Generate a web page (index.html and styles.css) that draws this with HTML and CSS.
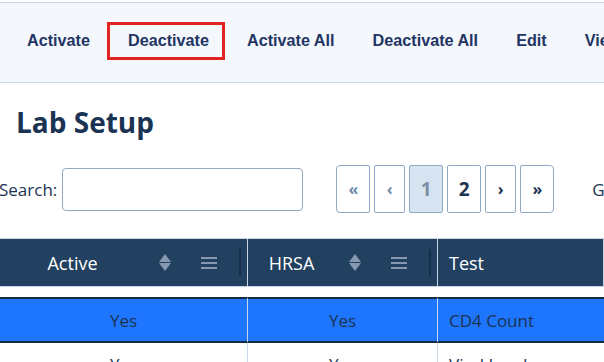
FILE: index.html
```html
<!DOCTYPE html>
<html lang="en">
<head>
    <meta charset="UTF-8">
    <meta name="viewport" content="width=device-width, initial-scale=1.0">
    <title>Lab Setup</title>
    <link rel="stylesheet" href="styles.css">
</head>
<body>
    <div class="barra">
        <button class="acao">Activate</button>
        <button class="acao marcado">Deactivate</button>
        <button class="acao">Activate All</button>
        <button class="acao">Deactivate All</button>
        <button class="acao">Edit</button>
        <button class="acao">View</button>
    </div>

    <h1 class="titulo">Lab Setup</h1>

    <div class="filtros">
        <label class="rotulo" for="busca">Search:</label>
        <input type="text" id="busca" class="busca">
        <div class="paginas">
            <button class="pagina apagada">&laquo;</button>
            <button class="pagina apagada">&lsaquo;</button>
            <button class="pagina atual">1</button>
            <button class="pagina numero">2</button>
            <button class="pagina">&rsaquo;</button>
            <button class="pagina">&raquo;</button>
        </div>
        <span class="ir">Go to page</span>
    </div>

    <div class="tabela">
        <div class="cab centro">
            <span class="nome">Active</span>
            <span class="ordem"><i class="cima"></i><i class="baixo"></i></span>
            <span class="menu"><i></i><i></i><i></i></span>
            <span class="alca"></span>
        </div>
        <div class="cab centro">
            <span class="nome">HRSA</span>
            <span class="ordem"><i class="cima"></i><i class="baixo"></i></span>
            <span class="menu"><i></i><i></i><i></i></span>
            <span class="alca"></span>
        </div>
        <div class="cab esquerda">
            <span class="nome">Test</span>
        </div>

        <div class="espaco"></div>

        <div class="cel centro sel">Yes</div>
        <div class="cel centro sel">Yes</div>
        <div class="cel sel">CD4 Count</div>

        <div class="cel centro">Yes</div>
        <div class="cel centro">Yes</div>
        <div class="cel">Viral Load</div>
    </div>
</body>
</html>
```

FILE: styles.css
```css
body {
    margin: 0;
    font-family: "Open Sans", "Noto Sans", sans-serif;
    color: #1b3352;
    background-color: #ffffff;
    overflow: hidden;
}

.barra {
    margin-top: 2px;
    padding: 0 0 4px 8px;
    box-sizing: border-box;
    height: 81px;
    display: flex;
    align-items: center;
    background-color: #f4f7fc;
    border-top: 1px solid #c8d8e8;
    border-bottom: 1px solid #c8d8e8;
    overflow: hidden;
    white-space: nowrap;
}

.acao {
    position: relative;
    flex: none;
    height: 38px;
    padding: 0 19px;
    font-family: "Liberation Sans", Arial, sans-serif;
    font-weight: bold;
    font-size: 16.2px;
    color: #1f3564;
    background: none;
    border: none;
    cursor: pointer;
}

.marcado::after {
    content: "";
    position: absolute;
    top: 0;
    bottom: 0;
    left: -2px;
    right: 3px;
    border: 3px solid #e02424;
}

.titulo {
    margin: 20px 0 0 16px;
    font-size: 28px;
    font-weight: bold;
    line-height: 38px;
    color: #1b3352;
}

.filtros {
    display: flex;
    align-items: center;
    margin-top: 24px;
    padding-bottom: 25px;
    border-bottom: 1px solid #ccd6e0;
    white-space: nowrap;
    overflow: hidden;
}

.filtros > * {
    flex: none;
}

.rotulo {
    margin-left: -1px;
    font-size: 17px;
    color: #1b3352;
}

.busca {
    margin-left: 5px;
    width: 241px;
    height: 43px;
    box-sizing: border-box;
    border: 1px solid #93a8bf;
    border-radius: 4px;
    font-size: 16px;
}

.paginas {
    display: flex;
    gap: 4px;
    margin-left: 33px;
}

.pagina {
    width: 34px;
    height: 48px;
    padding: 0;
    font-family: "Open Sans", sans-serif;
    font-weight: bold;
    font-size: 16px;
    color: #1b3352;
    background-color: #ffffff;
    border: 1px solid #8fa8c4;
    border-radius: 2px;
}

.pagina:nth-child(2), .pagina:nth-child(5) {
    width: 31px;
}

.pagina:first-child {
    border-radius: 4px 2px 2px 4px;
}

.pagina:last-child {
    border-radius: 2px 4px 4px 2px;
}

.apagada {
    color: #6f8aa7;
}

.atual, .numero {
    font-size: 19px;
}

.atual {
    color: #7c8ea2;
    background-color: #d6e4f2;
}

.ir {
    margin-left: 38px;
    font-size: 17px;
    color: #1b3352;
}

.tabela {
    display: grid;
    grid-template-columns: 248px 190px 1fr;
}

.cab {
    display: flex;
    align-items: center;
    height: 47px;
    background-color: #22405f;
    color: #ffffff;
    font-size: 18px;
    border-right: 1px solid #c8d6e6;
    border-bottom: 1px solid #c8d6e6;
}

.cab:last-of-type {
    border-right: none;
}

.cab .nome {
    flex: 1;
    padding-right: 14px;
}

.cab.centro .nome {
    text-align: center;
}

.cab.esquerda .nome {
    padding-left: 11px;
}

.ordem {
    display: flex;
    flex-direction: column;
    gap: 1px;
    width: 12px;
}

.ordem i {
    display: block;
    width: 0;
    height: 0;
    border-left: 6px solid transparent;
    border-right: 6px solid transparent;
}

.ordem .cima {
    border-bottom: 8px solid #8799b0;
}

.ordem .baixo {
    border-top: 8px solid #8799b0;
}

.menu {
    display: flex;
    flex-direction: column;
    gap: 3px;
    width: 16px;
    margin-left: 30px;
}

.menu i {
    display: block;
    height: 2px;
    background-color: #8799b0;
}

.alca {
    width: 2px;
    height: 27px;
    margin: 0 6px 0 22px;
    background-color: #172f4d;
}

.espaco {
    grid-column: 1 / 4;
    height: 10px;
}

.cel {
    display: flex;
    align-items: center;
    height: 42px;
    padding-left: 11px;
    font-size: 17px;
    color: #1b3352;
    border-right: 1px solid #c8d6e6;
}

.cel:nth-child(3n+1) {
    border-right: none;
}

.cel.centro {
    justify-content: center;
    padding-left: 0;
}

.sel {
    background-color: #1f76fe;
    border-top: 2px solid #172b45;
    border-bottom: 2px solid #172b45;
}
```
